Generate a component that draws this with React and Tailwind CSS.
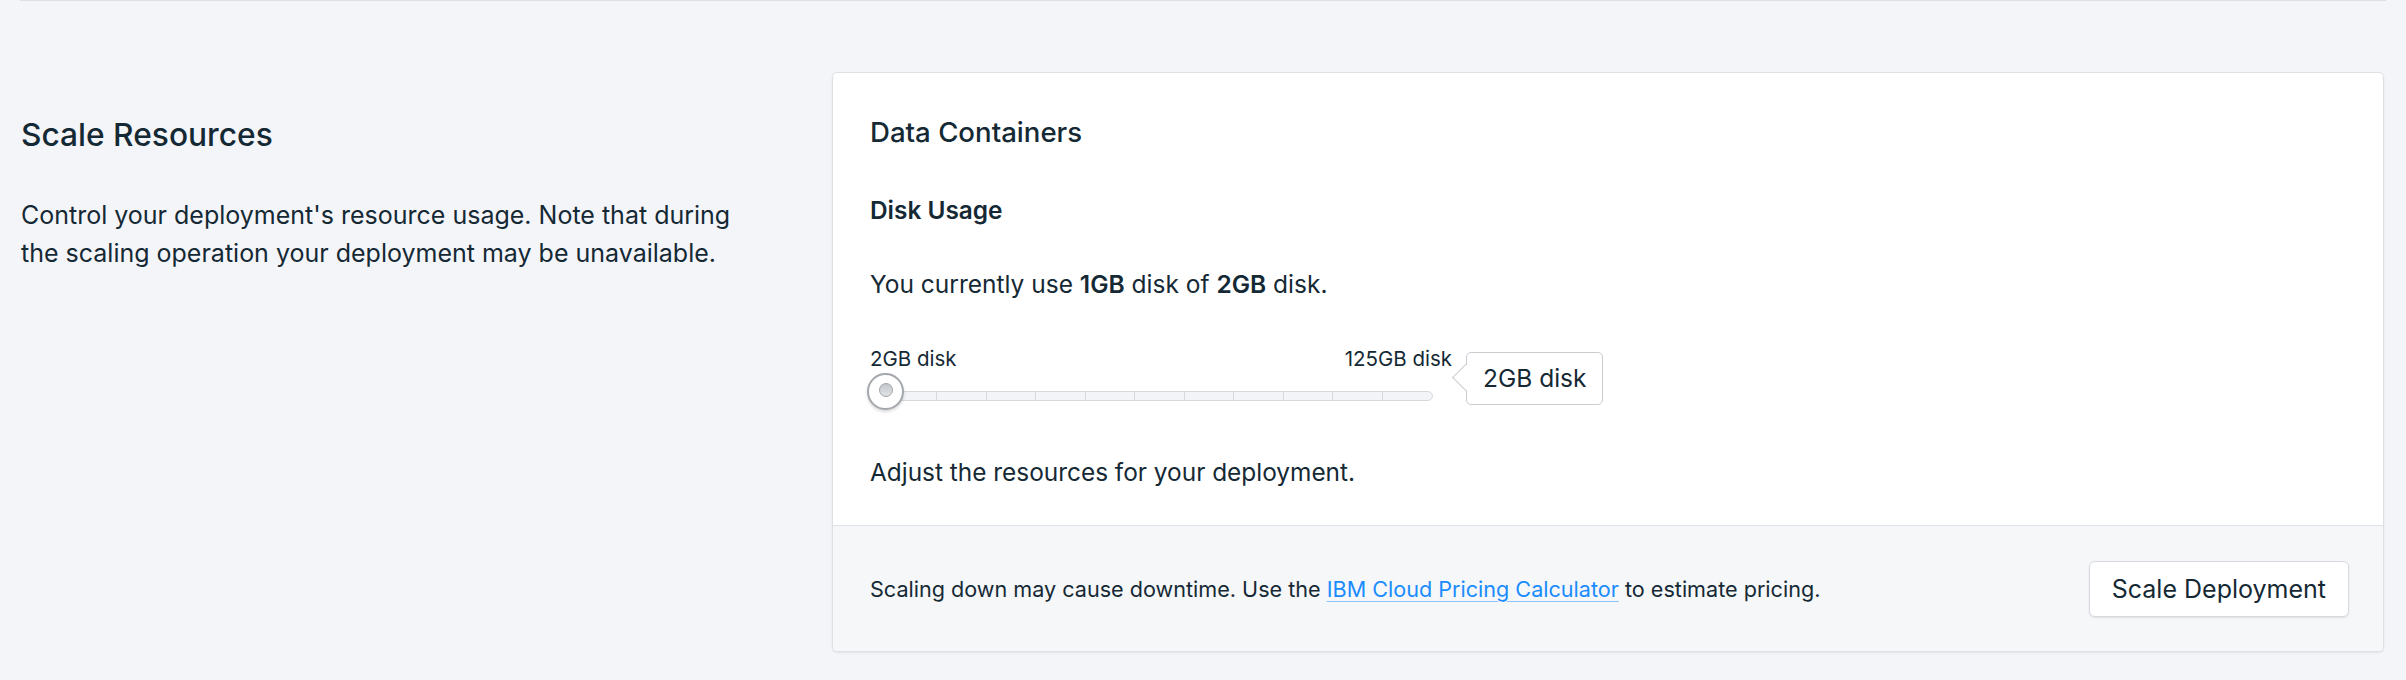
import React from "react";

function Slider() {
  const ticks = Array.from({ length: 10 });
  return (
    <div className="w-[582px]">
      <div className="flex justify-between text-[20.5px] leading-[24px]">
        <span>2GB disk</span>
        <span>125GB disk</span>
      </div>
      <div className="relative mt-[1px] h-[38px] w-[563px]">
        <div className="absolute left-0 right-0 top-[19px] flex h-[10px] rounded-full border border-[#d5d9de] bg-[#f3f4f7] pl-[65px]">
          {ticks.map((_, i) => (
            <div key={i} className="h-full w-[49.5px] shrink-0 border-l border-[#d5d9de]" />
          ))}
        </div>
        <div className="absolute left-[-3px] top-[1px] flex h-[37px] w-[37px] items-center justify-center rounded-full border-2 border-[#a4a8ad] bg-white shadow-[0_2px_3px_rgba(0,0,0,0.15)]">
          <div className="mt-[-3px] h-[14px] w-[14px] rounded-full border border-[#9fa4a9] bg-gradient-to-b from-[#c4c8cc] to-[#e1e3e6]" />
        </div>
      </div>
    </div>
  );
}

export default function App() {
  return (
    <div className="min-h-screen bg-[#f4f5f9] font-['Inter',sans-serif] text-[#152935]">
      <div className="mx-[20px] border-t border-[#dcdfe5]" />
      <div className="flex pl-[21px] pr-[22px] pt-[71px]">
        <div className="w-[730px] shrink-0">
          <h2 className="mt-[43px] text-[31.7px] font-medium leading-[40px]">Scale Resources</h2>
          <p className="mt-[41px] text-[25px] leading-[38px]">
            Control your deployment's resource usage. Note that during the scaling operation your deployment may be unavailable.
          </p>
        </div>
        <div className="ml-[81px] flex-1 overflow-hidden rounded-[5px] border border-[#dde1e6] bg-white shadow-[0_1px_2px_rgba(0,0,0,0.08)]">
          <div className="px-[37px] pt-[42px] pb-[38px]">
            <h3 className="text-[27.6px] font-medium leading-[34px]">Data Containers</h3>
            <h4 className="mt-[46px] text-[24.4px] font-semibold leading-[30px]">Disk Usage</h4>
            <p className="mt-[44px] text-[24.5px] leading-[30px]">
              You currently use <b className="font-semibold">1GB</b> disk of <b className="font-semibold">2GB</b> disk.
            </p>
            <div className="mt-[48px] flex items-center">
              <Slider />
              <div className="relative ml-[14px] rounded-[5px] border border-[#c9cdd2] bg-white px-[16px] py-[9px] text-[24.5px] leading-[33px]">
                <div className="absolute left-[-11px] top-[15px] h-[19px] w-[19px] rotate-45 border-b border-l border-[#c9cdd2] bg-white" />
                <span className="relative">2GB disk</span>
              </div>
            </div>
            <p className="mt-[47px] text-[24.4px] leading-[30px]">Adjust the resources for your deployment.</p>
          </div>
          <div className="flex h-[126px] items-center justify-between border-t border-[#dde1e6] bg-[#f5f7f9] pl-[37px] pr-[34px]">
            <p className="text-[21.6px] leading-[28px]">
              Scaling down may cause downtime. Use the{" "}
              <a href="#" className="text-[#1a8cff] underline decoration-[#8cc4ff] decoration-1 underline-offset-[4px]">
                IBM Cloud Pricing Calculator
              </a>{" "}
              to estimate pricing.
            </p>
            <button className="h-[56px] rounded-[6px] border border-[#d7dbe0] bg-white px-[22px] text-[25px] leading-[30px] text-[#152935] shadow-[0_1px_2px_rgba(0,0,0,0.1)]">
              Scale Deployment
            </button>
          </div>
        </div>
      </div>
    </div>
  );
}
